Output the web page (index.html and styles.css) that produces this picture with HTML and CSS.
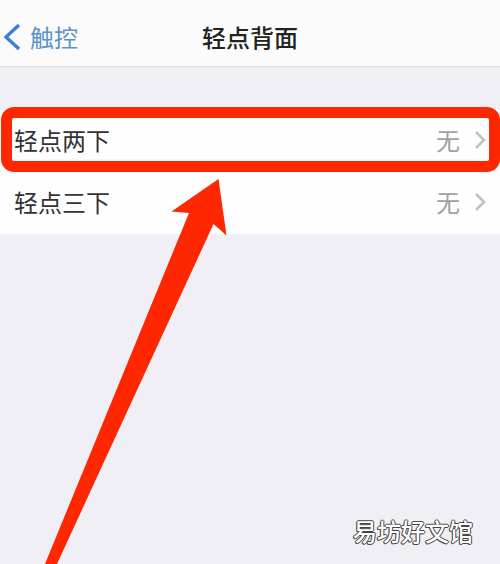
FILE: index.html
```html
<!DOCTYPE html>
<html lang="zh-CN">
<head>
    <meta charset="UTF-8">
    <meta name="viewport" content="width=device-width, initial-scale=1.0">
    <title>轻点背面</title>
    <link rel="stylesheet" href="styles.css">
</head>
<body>
    <div class="page">
        <header class="navbar">
            <a href="#" class="back">
                <svg class="back-icon" width="17" height="28" viewBox="0 0 17 28" aria-hidden="true">
                    <path d="M15 2 L2 14 L15 26" fill="none" stroke="currentColor" stroke-width="3.500"/>
                </svg>
                <span>触控</span>
            </a>
            <h1 class="title">轻点背面</h1>
        </header>
        <main class="content">
            <ul class="list">
                <li class="item marked">
                    <a href="#" class="row">
                        <span class="label">轻点两下</span>
                        <span class="value">无</span>
                        <svg class="chevron" width="12" height="20" viewBox="0 0 12 20" aria-hidden="true">
                            <path d="M2 2 L10 10 L2 18" fill="none" stroke="currentColor" stroke-width="2.500"/>
                        </svg>
                    </a>
                </li>
                <li class="item">
                    <a href="#" class="row">
                        <span class="label">轻点三下</span>
                        <span class="value">无</span>
                        <svg class="chevron" width="12" height="20" viewBox="0 0 12 20" aria-hidden="true">
                            <path d="M2 2 L10 10 L2 18" fill="none" stroke="currentColor" stroke-width="2.500"/>
                        </svg>
                    </a>
                </li>
            </ul>
        </main>
        <footer class="credit">易坊好文馆</footer>
        <svg class="arrow" width="182" height="385" viewBox="0 0 182 385" aria-hidden="true">
            <path d="M173.500 0 L126.500 32.500 L144 34 L0 385 H12 L168.500 45 L181.500 56.500 Z" fill="#ff2700"/>
        </svg>
    </div>
</body>
</html>
```

FILE: styles.css
```css
* {
    box-sizing: border-box;
}
body {
    margin: 0;
    font-family: "Noto Sans CJK SC", sans-serif;
    font-size: 24px;
    line-height: 34px;
    color: #333;
    background: #f0eff5;
}
a {
    color: inherit;
    text-decoration: none;
}
.page {
    position: relative;
    display: flex;
    flex-direction: column;
    min-height: 100vh;
    overflow: hidden;
}
.navbar {
    display: grid;
    grid-template-columns: 1fr auto 1fr;
    align-items: center;
    padding: 20px 4px 12px;
    background: #fbfbfc;
    border-bottom: 1px solid #dcdbe1;
}
.back {
    display: flex;
    align-items: center;
    gap: 9px;
    color: #5a94c8;
}
.back-icon {
    color: #3f7fd0;
}
.title {
    margin: 0;
    font-size: 24px;
    font-weight: 500;
    color: #222;
}
.content {
    flex: 1;
    padding-top: 43px;
}
.list {
    margin: 0;
    padding: 0;
    list-style: none;
    background: #fefefe;
}
.item {
    position: relative;
}
.row {
    display: flex;
    align-items: center;
    padding: 13px 14px 15px;
}
.label {
    flex: 1;
}
.value {
    margin-right: 14px;
    color: #a0a0a0;
}
.chevron {
    color: #c0c0c2;
}
/* red frame around the first row */
.marked::after {
    content: "";
    position: absolute;
    inset: -3px 0 0 1px;
    border: 11px solid #ff2700;
    border-radius: 13px;
    pointer-events: none;
}
.arrow {
    position: absolute;
    left: 45px;
    top: 179px;
    pointer-events: none;
}
.credit {
    padding: 0 27px 16px;
    text-align: right;
    font-weight: 500;
    color: #fff;
    text-shadow: -1px 0 #444, 1px 0 #444, 0 -1px #444, 0 1px #444, -1px 1px #666;
}
```
